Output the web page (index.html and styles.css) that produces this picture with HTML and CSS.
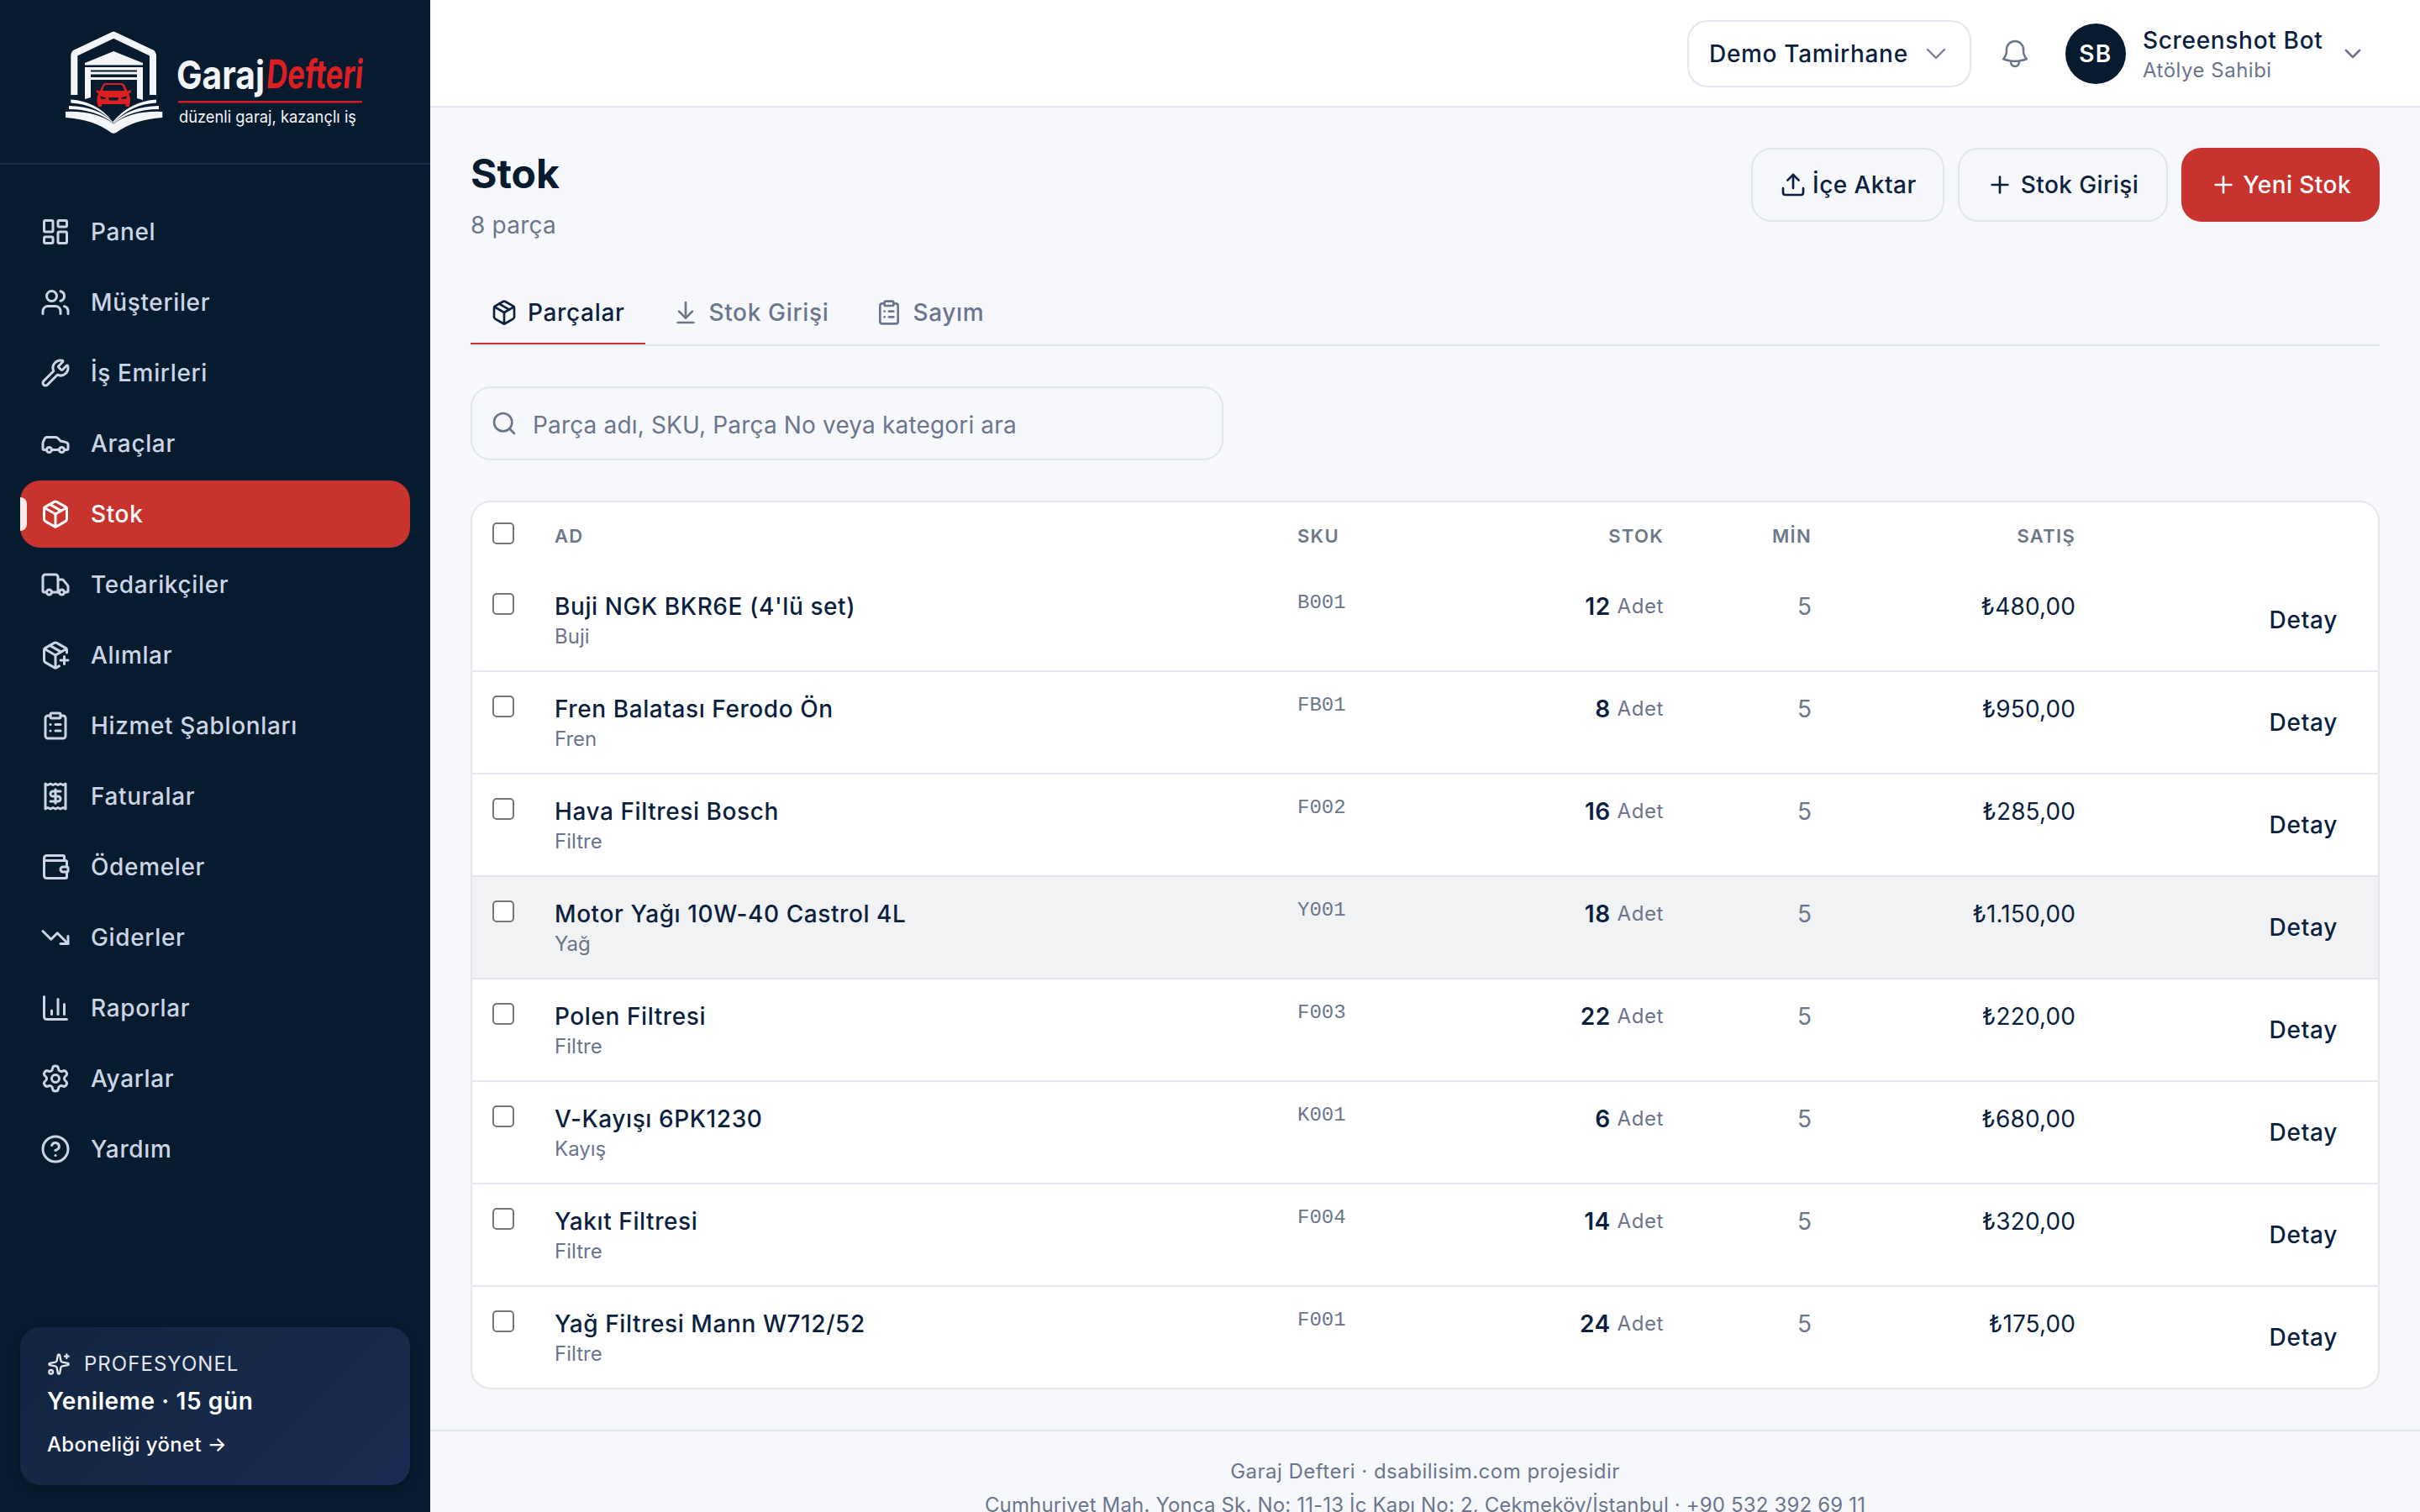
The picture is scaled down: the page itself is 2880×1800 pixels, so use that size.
FILE: index.html
```html
<!DOCTYPE html>
<html lang="tr">
  <head>
    <meta charset="UTF-8" />
    <meta name="viewport" content="width=device-width, initial-scale=1.0" />
    <title>Stok - Garaj Defteri</title>
    <link rel="stylesheet" href="styles.css">
  </head>
  <body>
    <!-- Icon set -->
    <svg class="sprite" xmlns="http://www.w3.org/2000/svg">
      <symbol id="i-panel" viewBox="0 0 24 24"><rect width="7" height="9" x="3" y="3" rx="1"/><rect width="7" height="5" x="14" y="3" rx="1"/><rect width="7" height="9" x="14" y="12" rx="1"/><rect width="7" height="5" x="3" y="16" rx="1"/></symbol>
      <symbol id="i-users" viewBox="0 0 24 24"><path d="M16 21v-2a4 4 0 0 0-4-4H6a4 4 0 0 0-4 4v2"/><circle cx="9" cy="7" r="4"/><path d="M22 21v-2a4 4 0 0 0-3-3.87"/><path d="M16 3.13a4 4 0 0 1 0 7.75"/></symbol>
      <symbol id="i-wrench" viewBox="0 0 24 24"><path d="M14.7 6.3a1 1 0 0 0 0 1.4l1.6 1.6a1 1 0 0 0 1.4 0l3.106-3.105c.32-.322.863-.22.983.218a6 6 0 0 1-8.259 7.057l-7.91 7.91a1 1 0 0 1-2.999-3l7.91-7.91a6 6 0 0 1 7.057-8.259c.438.12.54.662.219.984z"/></symbol>
      <symbol id="i-car" viewBox="0 0 24 24"><path d="M19 17h2c.6 0 1-.4 1-1v-3c0-.9-.7-1.7-1.5-1.9C18.7 10.6 16 10 16 10s-1.3-1.4-2.2-2.3c-.5-.4-1.1-.7-1.8-.7H5c-.6 0-1.1.4-1.4.9l-1.4 2.9A3.7 3.7 0 0 0 2 12v4c0 .6.4 1 1 1h2"/><circle cx="7" cy="17" r="2"/><path d="M9 17h6"/><circle cx="17" cy="17" r="2"/></symbol>
      <symbol id="i-package" viewBox="0 0 24 24"><path d="M11 21.73a2 2 0 0 0 2 0l7-4A2 2 0 0 0 21 16V8a2 2 0 0 0-1-1.73l-7-4a2 2 0 0 0-2 0l-7 4A2 2 0 0 0 3 8v8a2 2 0 0 0 1 1.73z"/><path d="M12 22V12"/><path d="M3.29 7 12 12l8.71-5"/><path d="m7.5 4.27 9 5.15"/></symbol>
      <symbol id="i-truck" viewBox="0 0 24 24"><path d="M14 18V6a2 2 0 0 0-2-2H4a2 2 0 0 0-2 2v11a1 1 0 0 0 1 1h2"/><path d="M15 18H9"/><path d="M19 18h2a1 1 0 0 0 1-1v-3.65a1 1 0 0 0-.22-.624l-3.48-4.35A1 1 0 0 0 17.52 8H14"/><circle cx="17" cy="18" r="2"/><circle cx="7" cy="18" r="2"/></symbol>
      <symbol id="i-package-plus" viewBox="0 0 24 24"><path d="M16 16h6"/><path d="M19 13v6"/><path d="M21 10V8a2 2 0 0 0-1-1.73l-7-4a2 2 0 0 0-2 0l-7 4A2 2 0 0 0 3 8v8a2 2 0 0 0 1 1.73l7 4a2 2 0 0 0 2 0l2-1.14"/><path d="m7.5 4.27 9 5.15"/><path d="M3.29 7 12 12l8.71-5"/><path d="M12 22V12"/></symbol>
      <symbol id="i-clipboard" viewBox="0 0 24 24"><rect width="8" height="4" x="8" y="2" rx="1"/><path d="M16 4h2a2 2 0 0 1 2 2v14a2 2 0 0 1-2 2H6a2 2 0 0 1-2-2V6a2 2 0 0 1 2-2h2"/><path d="M12 11h4"/><path d="M12 16h4"/><path d="M8 11h.01"/><path d="M8 16h.01"/></symbol>
      <symbol id="i-receipt" viewBox="0 0 24 24"><path d="M4 2v20l2-1 2 1 2-1 2 1 2-1 2 1 2-1 2 1V2l-2 1-2-1-2 1-2-1-2 1-2-1-2 1Z"/><path d="M16 8h-6a2 2 0 1 0 0 4h4a2 2 0 1 1 0 4H8"/><path d="M12 17.5v-11"/></symbol>
      <symbol id="i-wallet" viewBox="0 0 24 24"><path d="M19 7V4a1 1 0 0 0-1-1H5a2 2 0 0 0 0 4h15a1 1 0 0 1 1 1v4h-3a2 2 0 0 0 0 4h3a1 1 0 0 0 1-1v-2a1 1 0 0 0-1-1"/><path d="M3 5v14a2 2 0 0 0 2 2h15a1 1 0 0 0 1-1v-4"/></symbol>
      <symbol id="i-trend" viewBox="0 0 24 24"><path d="M16 17h6v-6"/><path d="m22 17-8.500-8.500-5 5L2 7"/></symbol>
      <symbol id="i-chart" viewBox="0 0 24 24"><path d="M3 3v16a2 2 0 0 0 2 2h16"/><path d="M9 17v-3"/><path d="M14 17V5"/><path d="M19 17V9"/></symbol>
      <symbol id="i-gear" viewBox="0 0 24 24"><path d="M9.671 4.136a2.34 2.34 0 0 1 4.659 0 2.34 2.34 0 0 0 3.319 1.915 2.34 2.34 0 0 1 2.33 4.033 2.34 2.34 0 0 0 0 3.831 2.34 2.34 0 0 1-2.33 4.033 2.34 2.34 0 0 0-3.319 1.915 2.34 2.34 0 0 1-4.659 0 2.34 2.34 0 0 0-3.32-1.915 2.34 2.34 0 0 1-2.33-4.033 2.34 2.34 0 0 0 0-3.831A2.34 2.34 0 0 1 6.35 6.051a2.34 2.34 0 0 0 3.319-1.915"/><circle cx="12" cy="12" r="3"/></symbol>
      <symbol id="i-help" viewBox="0 0 24 24"><circle cx="12" cy="12" r="10"/><path d="M9.09 9a3 3 0 0 1 5.83 1c0 2-3 3-3 3"/><path d="M12 17h.01"/></symbol>
      <symbol id="i-sparkles" viewBox="0 0 24 24"><path d="M11.017 2.814a1 1 0 0 1 1.966 0l1.051 5.558a2 2 0 0 0 1.594 1.594l5.558 1.051a1 1 0 0 1 0 1.966l-5.558 1.051a2 2 0 0 0-1.594 1.594l-1.051 5.558a1 1 0 0 1-1.966 0l-1.051-5.558a2 2 0 0 0-1.594-1.594l-5.558-1.051a1 1 0 0 1 0-1.966l5.558-1.051a2 2 0 0 0 1.594-1.594z"/><path d="M20 2v4"/><path d="M22 4h-4"/><circle cx="4" cy="20" r="2"/></symbol>
      <symbol id="i-chevron-wide" viewBox="0 0 24 24"><path d="m19.500 8.250-7.500 7.500-7.500-7.500"/></symbol>
      <symbol id="i-chevron" viewBox="0 0 24 24"><path d="m6 9 6 6 6-6"/></symbol>
      <symbol id="i-bell" viewBox="0 0 24 24"><path d="M14.857 17.082a23.848 23.848 0 0 0 5.454-1.31A8.967 8.967 0 0 1 18 9.75V9A6 6 0 0 0 6 9v.75a8.967 8.967 0 0 1-2.312 6.022c1.733.64 3.56 1.085 5.455 1.31m5.714 0a24.255 24.255 0 0 1-5.714 0m5.714 0a3 3 0 1 1-5.714 0"/></symbol>
      <symbol id="i-upload" viewBox="0 0 24 24"><path d="M12 3v12"/><path d="m17 8-5-5-5 5"/><path d="M21 15v4a2 2 0 0 1-2 2H5a2 2 0 0 1-2-2v-4"/></symbol>
      <symbol id="i-plus" viewBox="0 0 24 24"><path d="M5 12h14"/><path d="M12 5v14"/></symbol>
      <symbol id="i-down" viewBox="0 0 24 24"><path d="M12 17V3"/><path d="m6 11 6 6 6-6"/><path d="M19 21H5"/></symbol>
      <symbol id="i-search" viewBox="0 0 24 24"><circle cx="11" cy="11" r="8"/><path d="m21 21-4.3-4.3"/></symbol>
    </svg>

    <div class="app">
      <aside class="sidebar">
        <div class="brand">
          <svg class="logo" viewBox="0 0 360 130" role="img" aria-label="Garaj Defteri">
            <!-- hexagon frame -->
            <path d="M10.300 79V32.500q0-2.500 2-3.700L57.200 7.500 102 28.800q2 1.200 2 3.700V79" fill="none" stroke="#f4f5f9" stroke-width="8" stroke-linejoin="round"/>
            <!-- garage -->
            <path d="M57.200 27 92 41v2.500H23V41z" fill="#f4f5f9"/>
            <path d="M23 46h69v39l-7-2V49.500H30V82l-7 2z" fill="#f4f5f9"/>
            <path d="M30 53h55M30 59.500h55" stroke="#f4f5f9" stroke-width="3"/>
            <!-- car -->
            <path d="M47.500 65h19q3 0 4.200 3l3 6.500 3.800-1.500.5 3-3 1.500q2 3 2 7v5h-1v3.500h-4.500V90H43v3h-4.500v-3.500h-1v-5q0-4 2-7l-3-1.500.5-3 3.800 1.500 3-6.500q1.200-3 3.700-3z" fill="#de1f22"/>
            <path d="M48 67h18q1.500 0 2 1.500l2 5.500h-26l2-5.500q.5-1.500 2-1.500z" fill="#071c30"/>
            <path d="M41 80.500l7 2-1 1.500-5-.5zM73 80.500l-7 2 1 1.500 5-.5zM51 82h12l-1 3.500H52z" fill="#071c30"/>
            <!-- open book -->
            <path d="M6.300 84.500q31 2 50 26.500Q77 86.500 108 84.500v4Q78 90 57.200 112 36 90 6.300 88.500z" fill="#f4f5f9"/>
            <path d="M4 92q34 .5 53.200 20Q77 92.500 111 92v4q-32 0-53.800 17Q36 96 4 96z" fill="#f4f5f9"/>
            <path d="M0 99q36-1.500 57.200 14.500Q78 97.500 115.300 99v7q-33 2-55.300 18-2.800 1.500-5.500 0Q33 108 0 106z" fill="#f4f5f9"/>
            <text class="logo-garaj" x="132" y="71.500" textLength="105" lengthAdjust="spacingAndGlyphs">Garaj</text>
            <text class="logo-defteri" x="238" y="71.500" textLength="115" lengthAdjust="spacingAndGlyphs">Defteri</text>
            <path d="M134 87.300h219" stroke="#cf1f24" stroke-width="2.600"/>
            <text class="logo-slogan" x="135" y="112" textLength="211" lengthAdjust="spacingAndGlyphs">düzenli garaj, kazançlı iş</text>
          </svg>
        </div>

        <nav class="nav">
          <a class="nav-item" href="#"><svg class="icon"><use href="#i-panel"/></svg>Panel</a>
          <a class="nav-item" href="#"><svg class="icon"><use href="#i-users"/></svg>Müşteriler</a>
          <a class="nav-item" href="#"><svg class="icon"><use href="#i-wrench"/></svg>İş Emirleri</a>
          <a class="nav-item" href="#"><svg class="icon"><use href="#i-car"/></svg>Araçlar</a>
          <a class="nav-item active" href="#"><svg class="icon"><use href="#i-package"/></svg>Stok</a>
          <a class="nav-item" href="#"><svg class="icon"><use href="#i-truck"/></svg>Tedarikçiler</a>
          <a class="nav-item" href="#"><svg class="icon"><use href="#i-package-plus"/></svg>Alımlar</a>
          <a class="nav-item" href="#"><svg class="icon"><use href="#i-clipboard"/></svg>Hizmet Şablonları</a>
          <a class="nav-item" href="#"><svg class="icon"><use href="#i-receipt"/></svg>Faturalar</a>
          <a class="nav-item" href="#"><svg class="icon"><use href="#i-wallet"/></svg>Ödemeler</a>
          <a class="nav-item" href="#"><svg class="icon"><use href="#i-trend"/></svg>Giderler</a>
          <a class="nav-item" href="#"><svg class="icon"><use href="#i-chart"/></svg>Raporlar</a>
          <a class="nav-item" href="#"><svg class="icon"><use href="#i-gear"/></svg>Ayarlar</a>
          <a class="nav-item" href="#"><svg class="icon"><use href="#i-help"/></svg>Yardım</a>
        </nav>

        <div class="plan">
          <div class="plan-label"><svg class="icon"><use href="#i-sparkles"/></svg>PROFESYONEL</div>
          <div class="plan-title">Yenileme · 15 gün</div>
          <a class="plan-link" href="#">Aboneliği yönet →</a>
        </div>
      </aside>

      <div class="content">
        <header class="topbar">
          <button type="button" class="workspace">Demo Tamirhane<svg class="icon"><use href="#i-chevron-wide"/></svg></button>
          <button type="button" class="bell" aria-label="Bildirimler"><svg class="icon"><use href="#i-bell"/></svg></button>
          <div class="user">
            <div class="avatar">SB</div>
            <div class="user-info">
              <div class="user-name">Screenshot Bot</div>
              <div class="user-role">Atölye Sahibi</div>
            </div>
            <svg class="icon"><use href="#i-chevron"/></svg>
          </div>
        </header>

        <main class="page">
          <div class="page-head">
            <div>
              <h1>Stok</h1>
              <p class="subtitle">8 parça</p>
            </div>
            <div class="actions">
              <button type="button" class="btn"><svg class="icon"><use href="#i-upload"/></svg>İçe Aktar</button>
              <button type="button" class="btn"><svg class="icon"><use href="#i-plus"/></svg>Stok Girişi</button>
              <button type="button" class="btn btn-primary"><svg class="icon"><use href="#i-plus"/></svg>Yeni Stok</button>
            </div>
          </div>

          <div class="tabs">
            <a class="tab active" href="#"><svg class="icon"><use href="#i-package"/></svg>Parçalar</a>
            <a class="tab" href="#"><svg class="icon"><use href="#i-down"/></svg>Stok Girişi</a>
            <a class="tab" href="#"><svg class="icon"><use href="#i-clipboard"/></svg>Sayım</a>
          </div>

          <label class="search">
            <svg class="icon"><use href="#i-search"/></svg>
            <input type="text" placeholder="Parça adı, SKU, Parça No veya kategori ara" />
          </label>

          <div class="card">
            <table>
              <colgroup>
                <col class="col-check" /><col class="col-name" /><col class="col-sku" /><col class="col-stock" /><col class="col-min" /><col class="col-price" /><col />
              </colgroup>
              <thead>
                <tr>
                  <th><input type="checkbox" /></th>
                  <th>AD</th>
                  <th>SKU</th>
                  <th class="right">STOK</th>
                  <th class="right">MİN</th>
                  <th class="right">SATIŞ</th>
                  <th></th>
                </tr>
              </thead>
              <tbody>
                <tr>
                  <td><input type="checkbox" /></td>
                  <td><div class="name">Buji NGK BKR6E (4'lü set)</div><div class="category">Buji</div></td>
                  <td class="sku">B001</td>
                  <td class="right"><span class="qty">12</span> <span class="unit">Adet</span></td>
                  <td class="right muted">5</td>
                  <td class="right price">₺480,00</td>
                  <td class="right"><a class="detail" href="#">Detay</a></td>
                </tr>
                <tr>
                  <td><input type="checkbox" /></td>
                  <td><div class="name">Fren Balatası Ferodo Ön</div><div class="category">Fren</div></td>
                  <td class="sku">FB01</td>
                  <td class="right"><span class="qty">8</span> <span class="unit">Adet</span></td>
                  <td class="right muted">5</td>
                  <td class="right price">₺950,00</td>
                  <td class="right"><a class="detail" href="#">Detay</a></td>
                </tr>
                <tr>
                  <td><input type="checkbox" /></td>
                  <td><div class="name">Hava Filtresi Bosch</div><div class="category">Filtre</div></td>
                  <td class="sku">F002</td>
                  <td class="right"><span class="qty">16</span> <span class="unit">Adet</span></td>
                  <td class="right muted">5</td>
                  <td class="right price">₺285,00</td>
                  <td class="right"><a class="detail" href="#">Detay</a></td>
                </tr>
                <tr class="hovered">
                  <td><input type="checkbox" /></td>
                  <td><div class="name">Motor Yağı 10W-40 Castrol 4L</div><div class="category">Yağ</div></td>
                  <td class="sku">Y001</td>
                  <td class="right"><span class="qty">18</span> <span class="unit">Adet</span></td>
                  <td class="right muted">5</td>
                  <td class="right price">₺1.150,00</td>
                  <td class="right"><a class="detail" href="#">Detay</a></td>
                </tr>
                <tr>
                  <td><input type="checkbox" /></td>
                  <td><div class="name">Polen Filtresi</div><div class="category">Filtre</div></td>
                  <td class="sku">F003</td>
                  <td class="right"><span class="qty">22</span> <span class="unit">Adet</span></td>
                  <td class="right muted">5</td>
                  <td class="right price">₺220,00</td>
                  <td class="right"><a class="detail" href="#">Detay</a></td>
                </tr>
                <tr>
                  <td><input type="checkbox" /></td>
                  <td><div class="name">V-Kayışı 6PK1230</div><div class="category">Kayış</div></td>
                  <td class="sku">K001</td>
                  <td class="right"><span class="qty">6</span> <span class="unit">Adet</span></td>
                  <td class="right muted">5</td>
                  <td class="right price">₺680,00</td>
                  <td class="right"><a class="detail" href="#">Detay</a></td>
                </tr>
                <tr>
                  <td><input type="checkbox" /></td>
                  <td><div class="name">Yakıt Filtresi</div><div class="category">Filtre</div></td>
                  <td class="sku">F004</td>
                  <td class="right"><span class="qty">14</span> <span class="unit">Adet</span></td>
                  <td class="right muted">5</td>
                  <td class="right price">₺320,00</td>
                  <td class="right"><a class="detail" href="#">Detay</a></td>
                </tr>
                <tr>
                  <td><input type="checkbox" /></td>
                  <td><div class="name">Yağ Filtresi Mann W712/52</div><div class="category">Filtre</div></td>
                  <td class="sku">F001</td>
                  <td class="right"><span class="qty">24</span> <span class="unit">Adet</span></td>
                  <td class="right muted">5</td>
                  <td class="right price">₺175,00</td>
                  <td class="right"><a class="detail" href="#">Detay</a></td>
                </tr>
              </tbody>
            </table>
          </div>
        </main>

        <footer class="footer">
          <p class="credit">Garaj Defteri · dsabilisim.com projesidir</p>
          <p class="address">Cumhuriyet Mah. Yonca Sk. No: 11-13 İç Kapı No: 2, Çekmeköy/İstanbul · +90 532 392 69 11</p>
        </footer>
      </div>
    </div>
  </body>
</html>
```
FILE: styles.css
```css
:root {
  --navy: #061b2e;
  --ink: #0b1f3f;
  --muted: #6b758c;
  --line: #e3e6ed;
  --bg: #f7f8fc;
  --red: #c8332d;
}

* {
  margin: 0;
  padding: 0;
  box-sizing: border-box;
}

html {
  overflow: hidden;
  background: var(--bg);
}

/* Designed at 1440x900, shown at double size */
body {
  width: 1440px;
  height: 900px;
  transform: scale(2);
  transform-origin: 0 0;
  font-family: Inter, "Liberation Sans", sans-serif;
  font-size: 14px;
  line-height: 20px;
  color: var(--ink);
  background: var(--bg);
}

a {
  color: inherit;
  text-decoration: none;
}

button {
  font: inherit;
  color: inherit;
  background: none;
  border: none;
}

.sprite {
  display: none;
}

.icon {
  width: 16px;
  height: 16px;
  flex-shrink: 0;
  fill: none;
  stroke: currentColor;
  stroke-width: 2;
  stroke-linecap: round;
  stroke-linejoin: round;
}

.app {
  display: flex;
  height: 900px;
  overflow: hidden;
}

/* Sidebar */
.sidebar {
  width: 256px;
  flex-shrink: 0;
  display: flex;
  flex-direction: column;
  background: var(--navy);
  color: #cbd5e5;
}

.brand {
  height: 98px;
  padding: 17px 39px 0;
  border-bottom: 1px solid #1a2b50;
}

.logo {
  display: block;
  width: 180px;
  height: 65px;
  overflow: visible;
}

.logo-garaj,
.logo-defteri {
  font-size: 47px;
  font-weight: 700;
  fill: #f4f5f9;
}

.logo-defteri {
  fill: #de1f22;
  transform: skewX(-5deg);
  transform-origin: 238px 71px;
}

.logo-slogan {
  font-size: 20px;
  fill: #f4f5f9;
}

.nav {
  flex: 1;
  display: flex;
  flex-direction: column;
  gap: 2px;
  padding: 20px 12px;
}

.nav-item {
  position: relative;
  display: flex;
  align-items: center;
  gap: 12px;
  height: 40px;
  padding: 0 12px;
  border-radius: 12px;
  font-weight: 500;
  letter-spacing: 0.32px;
}

.nav-item .icon {
  width: 18px;
  height: 18px;
}

.nav-item.active {
  background: var(--red);
  color: #fff;
}

.nav-item.active::before {
  content: "";
  position: absolute;
  left: 0;
  top: 10px;
  width: 4px;
  height: 20px;
  border-radius: 0 4px 4px 0;
  background: rgba(255, 255, 255, 0.9);
}

.plan {
  height: 94px;
  margin: 0 12px 16px;
  padding: 14px 16px;
  border-radius: 12px;
  background: linear-gradient(135deg, #11253f, #1b2c52);
  box-shadow: 0 2px 6px rgba(0, 0, 0, 0.2);
  color: #fff;
}

.plan-label {
  display: flex;
  align-items: center;
  gap: 8px;
  font-size: 12px;
  line-height: 16px;
  letter-spacing: 0.52px;
  color: #e3e6ec;
}

.plan-label .icon {
  width: 14px;
  height: 14px;
}

.plan-title {
  margin-top: 4px;
  font-weight: 600;
  letter-spacing: 0.3px;
}

.plan-link {
  display: block;
  margin-top: 8px;
  font-size: 12px;
  line-height: 16px;
  font-weight: 500;
  letter-spacing: 0.17px;
}

/* Top bar */
.content {
  flex: 1;
  min-width: 0;
  display: flex;
  flex-direction: column;
}

.topbar {
  height: 64px;
  flex-shrink: 0;
  display: flex;
  align-items: center;
  justify-content: flex-end;
  padding-right: 32px;
  background: #fff;
  border-bottom: 1px solid var(--line);
  letter-spacing: 0.34px;
}

.topbar .icon {
  color: var(--muted);
}

.workspace {
  display: flex;
  align-items: center;
  justify-content: space-between;
  width: 169px;
  height: 40px;
  padding: 0 12px;
  border: 1px solid var(--line);
  border-radius: 12px;
  font-weight: 500;
  letter-spacing: inherit;
}

.workspace .icon,
.bell .icon {
  stroke-width: 1.5;
}

.bell {
  display: flex;
  justify-content: center;
  align-items: center;
  width: 36px;
  height: 36px;
  margin-left: 8px;
}

.bell .icon {
  width: 20px;
  height: 20px;
}

.user {
  display: flex;
  align-items: center;
  width: 179px;
  margin-left: 12px;
}

.avatar {
  display: flex;
  align-items: center;
  justify-content: center;
  width: 36px;
  height: 36px;
  border-radius: 50%;
  background: var(--navy);
  color: #fff;
  font-weight: 600;
  letter-spacing: 0.7px;
}

.user-info {
  margin-left: 10px;
  padding-top: 1px;
}

.user-name {
  font-weight: 500;
  line-height: 18px;
}

.user-role {
  margin-top: 1px;
  font-size: 12px;
  line-height: 16px;
  letter-spacing: 0.25px;
  color: var(--muted);
}

.user .icon {
  margin-left: auto;
}

/* Page */
.page {
  padding: 24px;
}

.page-head {
  display: flex;
  justify-content: space-between;
  height: 78px;
}

h1 {
  font-size: 24px;
  line-height: 32px;
  font-weight: 700;
  color: var(--navy);
}

.subtitle {
  margin-top: 4px;
  letter-spacing: 0.1px;
  color: var(--muted);
}

.actions {
  display: flex;
  gap: 8px;
}

.btn {
  display: flex;
  align-items: center;
  gap: 4px;
  height: 44px;
  padding: 0 16px;
  border: 1px solid var(--line);
  border-radius: 12px;
  font-weight: 500;
  letter-spacing: 0.22px;
}

.btn-primary {
  border-color: var(--red);
  background: var(--red);
  color: #fff;
}

.tabs {
  display: flex;
  gap: 4px;
  height: 40px;
  border-bottom: 1px solid var(--line);
}

.tab {
  display: flex;
  align-items: center;
  gap: 6px;
  padding: 2px 12px 0;
  border-bottom: 1px solid transparent;
  color: var(--muted);
  font-weight: 500;
  letter-spacing: 0.33px;
}

.tab.active {
  border-color: var(--red);
  color: var(--ink);
}

.search {
  display: flex;
  align-items: center;
  gap: 9px;
  width: 448px;
  height: 44px;
  margin-top: 24px;
  padding: 0 11px;
  border: 1px solid var(--line);
  border-radius: 12px;
  color: var(--muted);
}

.search input {
  flex: 1;
  padding-top: 2px;
  border: none;
  outline: none;
  background: none;
  font: inherit;
  letter-spacing: 0.08px;
}

.search input::placeholder {
  color: var(--muted);
}

/* Table */
.card {
  margin-top: 24px;
  border: 1px solid #e5e7eb;
  border-radius: 12px;
  background: #fff;
  overflow: hidden;
}

table {
  width: 100%;
  table-layout: fixed;
  border-collapse: separate;
  border-spacing: 0;
}

.col-check {
  width: 37px;
}

.col-name {
  width: 442px;
}

.col-sku {
  width: 120px;
}

.col-stock {
  width: 122px;
}

.col-min {
  width: 88px;
}

.col-price {
  width: 157px;
}

th {
  height: 40px;
  padding: 12px 12px 0;
  text-align: left;
  vertical-align: top;
  font-size: 11px;
  line-height: 16px;
  font-weight: 600;
  letter-spacing: 0.65px;
  color: #6b7888;
}

td {
  height: 61px;
  padding: 12px 12px 0;
  vertical-align: top;
  border-bottom: 1px solid var(--line);
}

tbody tr:last-child td {
  height: 60px;
  border-bottom: none;
}

.hovered {
  background: #f1f2f4;
}

.right {
  text-align: right;
}

input[type="checkbox"] {
  appearance: none;
  display: block;
  width: 13px;
  height: 13px;
  border: 1px solid #767676;
  border-radius: 2.5px;
  background: #fff;
}

td input[type="checkbox"] {
  margin-top: 2px;
}

.name {
  font-weight: 500;
  letter-spacing: 0.29px;
}

.category {
  font-size: 12px;
  line-height: 16px;
  color: var(--muted);
}

.sku {
  font-family: "Liberation Mono", monospace;
  font-size: 12px;
  line-height: 16px;
  color: var(--muted);
}

.qty {
  font-weight: 600;
  letter-spacing: 0.25px;
}

.unit {
  vertical-align: 1px;
  font-size: 12px;
  line-height: 16px;
  letter-spacing: 0.3px;
  color: var(--muted);
}

.price {
  letter-spacing: 0.05px;
}

.muted {
  color: var(--muted);
}

.detail {
  display: inline-block;
  padding: 8px 12px;
  font-weight: 500;
  letter-spacing: 0.35px;
}

/* Footer */
.footer {
  padding-top: 14px;
  border-top: 1px solid var(--line);
  text-align: center;
  font-size: 12px;
  line-height: 20px;
  color: var(--muted);
}

.credit {
  letter-spacing: 0.24px;
}

.address {
  letter-spacing: 0.08px;
}
```
